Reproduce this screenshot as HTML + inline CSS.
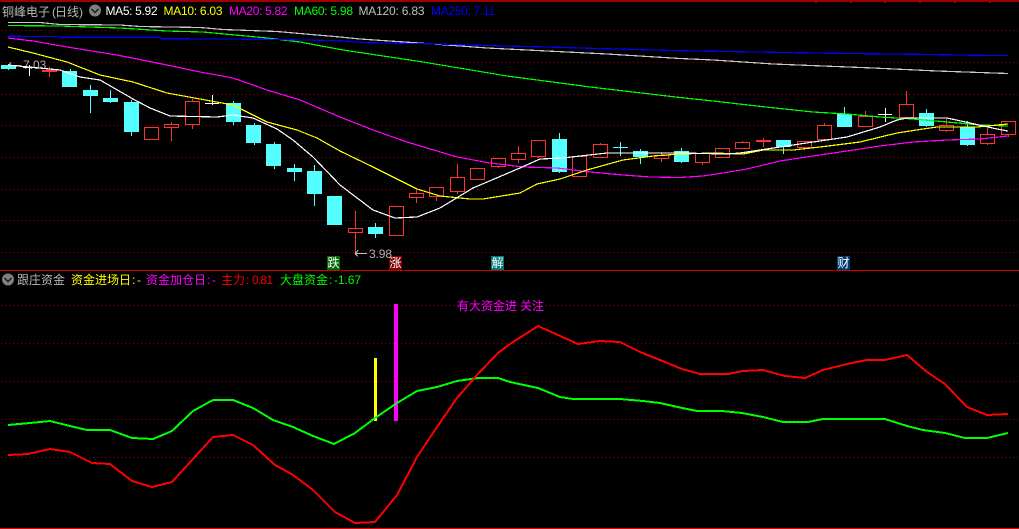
<!DOCTYPE html>
<html><head><meta charset="utf-8"><style>
html,body{margin:0;padding:0;background:#000;width:1019px;height:529px;overflow:hidden}
svg{display:block}
text{font-family:"Liberation Sans","WenQuanYi Zen Hei","Noto Sans CJK SC",sans-serif;font-size:12px}
.cjk{font-family:"WenQuanYi Zen Hei","Noto Sans CJK SC",sans-serif}
.l{fill:none;stroke-width:1.2}
</style></head><body>
<svg width="1019" height="529" viewBox="0 0 1019 529" xmlns="http://www.w3.org/2000/svg">
<rect width="1019" height="529" fill="#000"/>
<text x="23" y="69" fill="#b0b0b0">7.03</text>
<g shape-rendering="crispEdges">
<path d="M8 65.500H20M8 65.500L11 62.500M8 65.500L11 68.500" stroke="#b0b0b0" fill="none"/>
<path d="M0 1H1019M816 1V3M851 1V3M885 1V3M920 1V3M955 1V3M990 1V3" stroke="#a00000" stroke-width="2" fill="none"/>
<g stroke="#960000" stroke-width="1" stroke-dasharray="1 3" fill="none">
<path d="M1 30.500H1019M1 62.500H1019M1 94.500H1019M1 125.500H1019M1 157.500H1019M1 189.500H1019M1 220.500H1019M1 252.500H1019"/>
<path d="M1 305.500H1019M1 343.500H1019M1 381.500H1019M1 419.500H1019M1 457.500H1019"/>
</g>
<path d="M0 270.500H1019" stroke="#d00000" stroke-width="1.400"/>
<path d="M0 528.500H1019" stroke="#e00000" stroke-width="1.400"/>
<!-- cyan candles -->
<g stroke="#54ffff" fill="none">
<path d="M8.500 64V70M90.500 85V113M110.500 90V103M131.500 100V136M233.500 101V125M254.500 123V145M274.500 142V169M294.500 164V181M314.500 165V206M375.500 223V238M559.500 133V173M620.500 142V156M613 147.500H628M640.500 149V164M681.500 148V163M783.500 140V154M844.500 107V114M926.500 109V127M967.500 121V146M70.500 69V71"/>
</g>
<g fill="#54ffff">
<rect x="1" y="65" width="15" height="4"/><rect x="62" y="71" width="15" height="16"/><rect x="83" y="90" width="15" height="6"/><rect x="103" y="98" width="15" height="4"/><rect x="124" y="102" width="15" height="30"/><rect x="226" y="103" width="15" height="19"/><rect x="246" y="125" width="15" height="18"/><rect x="266" y="144" width="15" height="22"/><rect x="287" y="168" width="15" height="4"/><rect x="307" y="171" width="15" height="23"/><rect x="327" y="196" width="15" height="29"/><rect x="368" y="227" width="15" height="7"/><rect x="552" y="139" width="15" height="33"/><rect x="633" y="151" width="15" height="6"/><rect x="674" y="151" width="15" height="11"/><rect x="776" y="140" width="15" height="7"/><rect x="837" y="114" width="15" height="13"/><rect x="919" y="113" width="15" height="13"/><rect x="960" y="127" width="15" height="18"/>
</g>
<!-- white crosses -->
<path d="M29.500 65V76M23 67.500H36M212.500 95V105M205 103.500H219M885.500 108V122M878 114.500H892" stroke="#fff" fill="none"/>
<!-- red candles -->
<path d="M49.500 67V77M171.500 122V141M192.500 99V129M355.500 211V255M396.500 206V236M416.500 190V203M436.500 187V201M457.500 164V194M498.500 158V168M518.500 146V163M538.500 140V158M579.500 156V177M600.500 143V150M661.500 152V162M702.500 153V165M742.500 141V148M763.500 138V147M804.500 141V150M824.500 123V130M865.500 111V120M906.500 91V110M946.500 119V132M987.500 128V145M1008.500 125V137" stroke="#ff3232" fill="none"/>
<rect x="42" y="70" width="15" height="2" fill="#ff3232"/><rect x="756" y="140" width="15" height="2" fill="#ff3232"/>
<g fill="#000" stroke="#ff3232">
<rect x="144.500" y="127.500" width="14" height="12"/><rect x="164.500" y="124.500" width="14" height="3"/><rect x="185.500" y="101.500" width="14" height="23"/><rect x="348.500" y="228.500" width="14" height="4"/><rect x="389.500" y="206.500" width="14" height="29"/><rect x="409.500" y="193.500" width="14" height="4"/><rect x="429.500" y="187.500" width="14" height="9"/><rect x="450.500" y="177.500" width="14" height="14"/><rect x="470.500" y="168.500" width="14" height="11"/><rect x="491.500" y="158.500" width="14" height="8"/><rect x="511.500" y="153.500" width="14" height="6"/><rect x="531.500" y="140.500" width="14" height="16"/><rect x="572.500" y="156.500" width="14" height="20"/><rect x="593.500" y="144.500" width="14" height="13"/><rect x="654.500" y="155.500" width="14" height="3"/><rect x="695.500" y="153.500" width="14" height="9"/><rect x="715.500" y="148.500" width="14" height="9"/><rect x="735.500" y="142.500" width="14" height="6"/><rect x="797.500" y="141.500" width="14" height="6"/><rect x="817.500" y="125.500" width="14" height="14"/><rect x="858.500" y="116.500" width="14" height="10"/><rect x="899.500" y="104.500" width="14" height="13"/><rect x="939.500" y="125.500" width="14" height="5"/><rect x="980.500" y="134.500" width="14" height="9"/><rect x="1001.500" y="121.500" width="14" height="13"/>
</g>
<!-- MA lines -->
<polyline class="l" stroke="#c8c8c8" points="8,22.500 40,22.500 60,24.500 120,25 140,26.500 200,27.500 223,29.500 277,31.500 340,37 360,39 412,42.500 447,45 487,48 547,51 607,54 680,58.500 713,60 773,64 873,68 937,71 1008,73.500"/>
<polyline class="l" stroke="#00ff00" points="8,25.500 60,26 120,28 167,31 203,32 267,38 300,42 340,49.500 423,62 507,76 590,87 680,97.500 713,101 763,106.700 813,112 847,114 880,117 913,119 947,122 980,125 1008,126"/>
<polyline class="l" stroke="#0000ff" stroke-width="1.400" points="8,36.300 60,36.500 60,37.300 160,37.300 162,38.700 267,39.300 305,40 340,40.700 367,42.700 427,43.700 467,45 547,47 590,48.300 680,50.700 713,51.300 773,52.300 835,53.300 917,54.300 977,55.300 1008,55.500"/>
<polyline class="l" stroke="#ff00ff" points="8,38 33,41 67,47 117,55 167,65 200,72 233,78 267,90 300,100 340,117 373,130 407,142 457,157 490,163 523,167 557,168 590,172 623,175 650,177 680,177.500 703,176 723,173 747,169 780,161 813,156 847,151 880,146 913,142 947,140 980,139 1008,136"/>
<polyline class="l" stroke="#ffff00" points="8,47 33,53 67,62 100,75 133,82 167,93 200,99 233,105 267,122 297,130 317,138 340,151 373,167 417,189 440,196 470,199 483,199 520,193 537,184 560,179 587,170 623,160 653,156 680,154 713,153 743,154 763,150 793,150 820,147 860,142 897,133 923,129 937,127 977,127 1008,124"/>
<polyline class="l" stroke="#ffffff" points="8,65 60,70 80,77 100,80 133,99 150,108 170,116 217,117 233,115 253,118 277,129 293,140 313,157 340,185 373,210 395,218 417,217 440,208 473,188 520,168 540,159 563,158 580,156 607,153 633,153 680,153 727,154 740,153 780,147 813,142 847,137 880,127 897,120 907,118 947,118 970,123 997,129 1008,131"/>
<!-- indicators -->
<rect x="374" y="358" width="3" height="63" fill="#ffff00"/>
<rect x="394" y="304" width="4" height="117" fill="#ff00ff"/>
<polyline fill="none" stroke="#00ff00" stroke-width="2" points="8,425 30,423 50,421 70,426 87,430 110,430 132,438 153,439 172,431 193,411 213,400 233,400 253,408 273,420 293,427 313,436 334,444 355,433 375,418 397,403 417,391 437,387 457,381 478,378 498,378 510,382 538,388 560,397 573,399 620,399 643,401 660,403 682,408 697,411 722,411 742,413 763,417 783,422 808,422 823,419 885,419 907,426 923,430 945,433 965,438 987,438 1008,433"/>
<polyline fill="none" stroke="#ff0000" stroke-width="2" points="8,455 28,454 50,449 70,452 92,463 110,464 132,481 152,487 172,482 213,437 233,435 253,445 275,465 293,475 313,490 335,512 355,523 375,522 397,495 417,457 437,427 457,398 477,375 498,353 510,344 538,326 578,344 600,341 620,342 640,352 660,360 682,369 700,374 728,374 743,371 763,370 785,376 805,378 823,370 847,364 867,360 885,360 907,355 927,372 945,384 967,407 987,415 1008,414"/>
<!-- tags -->
<rect x="327" y="256" width="13" height="14" fill="#006a00"/>
<rect x="389" y="256" width="13" height="14" fill="#7d0000"/>
<rect x="491" y="256" width="13" height="14" fill="#007878"/>
<rect x="837" y="256" width="13" height="14" fill="#003c70"/>
<path d="M355 253.500H367M355 253.500L358 250.500M355 253.500L358 256.500" stroke="#c0c0c0" fill="none"/>
</g>
<!-- tag text -->
<g fill="#fff" text-anchor="middle">
<text class="cjk" x="333.500" y="267">跌</text>
<text class="cjk" x="395.500" y="267">涨</text>
<text class="cjk" x="497.500" y="267">解</text>
<text class="cjk" x="843.500" y="267">财</text>
</g>
<text x="369" y="258" fill="#b0b0b0" textLength="23">3.98</text>
<!-- header -->
<text class="cjk" x="2" y="16" fill="#b8b8b8">铜峰电子</text>
<text x="52" y="16" fill="#b8b8b8">(</text>
<text class="cjk" x="55" y="16" fill="#b8b8b8">日线</text>
<text x="79" y="16" fill="#b8b8b8">)</text>
<circle cx="95" cy="10.500" r="6" fill="#808080"/>
<path d="M91.500 9L95 12.500L98.500 9" stroke="#1a1a1a" stroke-width="1.500" fill="none"/>
<text x="105.500" y="15" fill="#ffffff" textLength="52">MA5: 5.92</text>
<text x="163.500" y="15" fill="#ffff00" textLength="59">MA10: 6.03</text>
<text x="229" y="15" fill="#ff00ff" textLength="58.500">MA20: 5.82</text>
<text x="294" y="15" fill="#00ff00" textLength="59">MA60: 5.98</text>
<text x="358.500" y="15" fill="#c0c0c0" textLength="66">MA120: 6.83</text>
<text x="431" y="15" fill="#0000ff" textLength="64">MA250: 7.11</text>
<!-- lower header -->
<circle cx="8" cy="279.500" r="6" fill="#808080"/>
<path d="M4.500 278L8 281.500L11.500 278" stroke="#1a1a1a" stroke-width="1.500" fill="none"/>
<text class="cjk" x="17" y="284" fill="#b8b8b8">跟庄资金</text>
<text class="cjk" x="71" y="284" fill="#ffff00">资金进场日</text>
<text x="132" y="284" fill="#ffff00">:</text><text x="137" y="284" fill="#ffff00">-</text>
<text class="cjk" x="146" y="284" fill="#ff00ff">资金加仓日</text>
<text x="207" y="284" fill="#ff00ff">:</text><text x="212" y="284" fill="#ff00ff">-</text>
<text class="cjk" x="221" y="284" fill="#ff0000">主力</text>
<text x="246" y="284" fill="#ff0000">:</text>
<text x="252" y="284" fill="#ff0000" textLength="21">0.81</text>
<text class="cjk" x="280" y="284" fill="#00ff00">大盘资金</text>
<text x="329" y="284" fill="#00ff00">:</text>
<text x="334" y="284" fill="#00ff00" textLength="27">-1.67</text>
<text class="cjk" x="457" y="310" fill="#ff00ff">有大资金进</text>
<text class="cjk" x="520" y="310" fill="#ff00ff">关注</text>
</svg>
</body></html>
